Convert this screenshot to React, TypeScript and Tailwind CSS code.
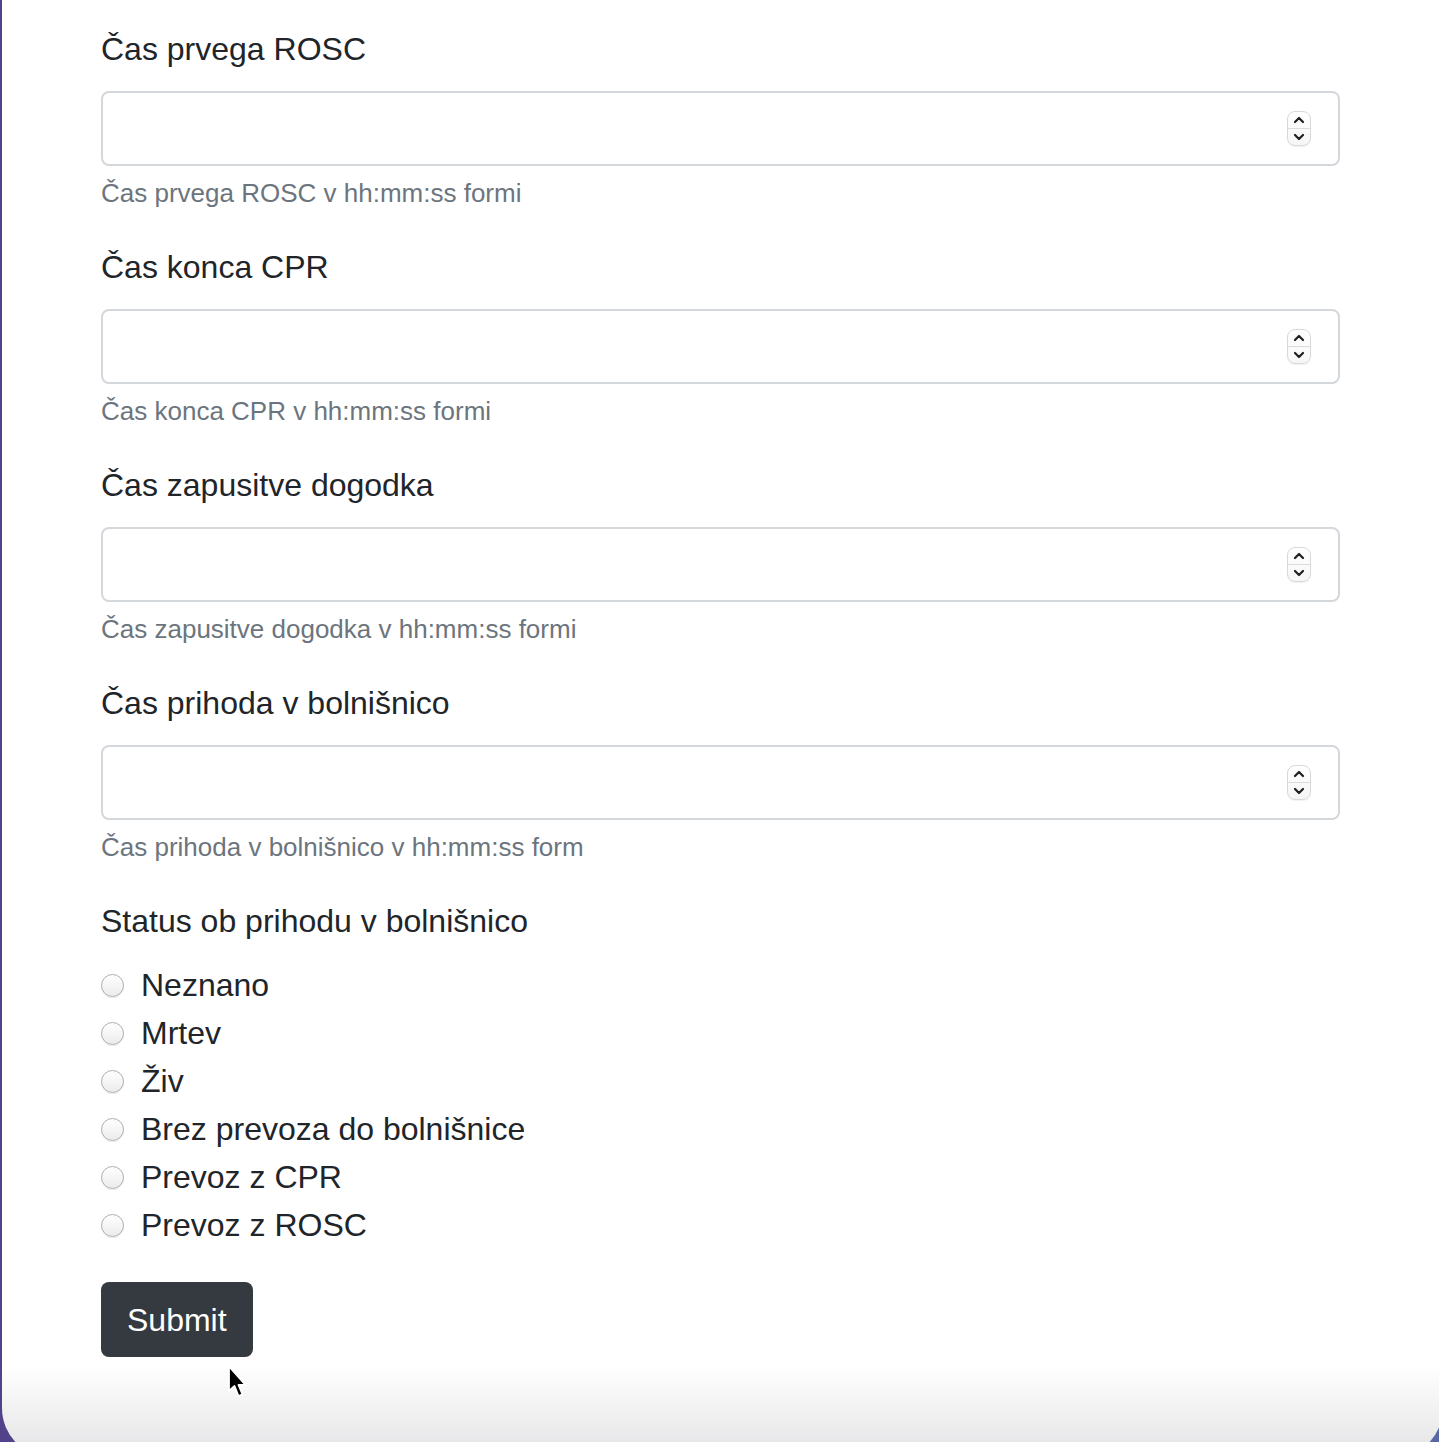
import React from "react";

const fields = [
  { label: "Čas prvega ROSC", help: "Čas prvega ROSC v hh:mm:ss formi" },
  { label: "Čas konca CPR", help: "Čas konca CPR v hh:mm:ss formi" },
  { label: "Čas zapusitve dogodka", help: "Čas zapusitve dogodka v hh:mm:ss formi" },
  { label: "Čas prihoda v bolnišnico", help: "Čas prihoda v bolnišnico v hh:mm:ss form" },
];

const statuses = ["Neznano", "Mrtev", "Živ", "Brez prevoza do bolnišnice", "Prevoz z CPR", "Prevoz z ROSC"];

function Spinner() {
  return (
    <div className="w-[24px] h-[35px] rounded-[8px] border border-[#d9d9d9] bg-gradient-to-b from-white to-[#f6f6f6] flex flex-col shadow-[0_1px_1px_rgba(0,0,0,0.06)]">
      <div className="flex-1 flex items-center justify-center">
        <svg width="12" height="8" viewBox="0 0 12 8" fill="none">
          <path d="M2 6 L6 2 L10 6" stroke="#1f1f1f" strokeWidth="2.2" strokeLinecap="round" strokeLinejoin="round" />
        </svg>
      </div>
      <div className="h-px bg-[#dcdcdc]" />
      <div className="flex-1 flex items-center justify-center">
        <svg width="12" height="8" viewBox="0 0 12 8" fill="none">
          <path d="M2 2 L6 6 L10 2" stroke="#1f1f1f" strokeWidth="2.2" strokeLinecap="round" strokeLinejoin="round" />
        </svg>
      </div>
    </div>
  );
}

function TimeField({ label, help }: { label: string; help: string }) {
  return (
    <div className="mb-[30px]">
      <label className="block text-[32px] leading-[48px] mb-[18px] text-[#212529]">{label}</label>
      <div className="h-[75px] rounded-[8px] border-2 border-[#d4d7db] bg-white flex items-center pl-[24px] pr-[27px]">
        <input type="text" className="flex-1 bg-transparent outline-none text-[32px] text-[#212529]" />
        <Spinner />
      </div>
      <div className="mt-[8px] text-[26px] leading-[39px] text-[#6c757d]">{help}</div>
    </div>
  );
}

export default function App() {
  return (
    <div className="h-[1442px] overflow-hidden pl-[2px] bg-[linear-gradient(to_right,#52428a,#5b67a4)]">
      <div className="w-[1441px] h-[1458px] rounded-b-[50px] bg-[linear-gradient(to_bottom,#ffffff_1366px,#e3e3e5_1458px)] pl-[99px] pt-[25px] font-['Liberation_Sans',Arial,sans-serif]">
        <form className="w-[1239px]" onSubmit={(e) => e.preventDefault()}>
          {fields.map((f) => (
            <TimeField key={f.label} label={f.label} help={f.help} />
          ))}

          <div className="text-[32px] leading-[48px] mb-[16px] text-[#212529]">Status ob prihodu v bolnišnico</div>
          <div className="flex flex-col">
            {statuses.map((s) => (
              <label key={s} className="flex items-center h-[48px] gap-[17px] text-[32px] text-[#212529]">
                <span className="w-[23px] h-[23px] rounded-full border border-[#adadad] bg-gradient-to-b from-white to-[#ececec] shadow-[0_1px_1px_rgba(0,0,0,0.08)]" />
                <span className="leading-[48px]">{s}</span>
              </label>
            ))}
          </div>

          <div className="relative mt-[33px]">
            <button type="submit" className="h-[75px] px-[26px] rounded-[8px] bg-[#343a40] text-white text-[32px]">
              Submit
            </button>
            <svg className="absolute left-[126px] top-[83px]" width="22" height="36" viewBox="0 0 22 36">
              <path d="M2 1.5 L2 26 L7.5 21 L11.5 31 L15.5 29.3 L11.5 19.8 L18.5 19.8 Z" fill="#000" stroke="#fff" strokeWidth="1.8" strokeLinejoin="round" />
            </svg>
          </div>
        </form>
      </div>
    </div>
  );
}
